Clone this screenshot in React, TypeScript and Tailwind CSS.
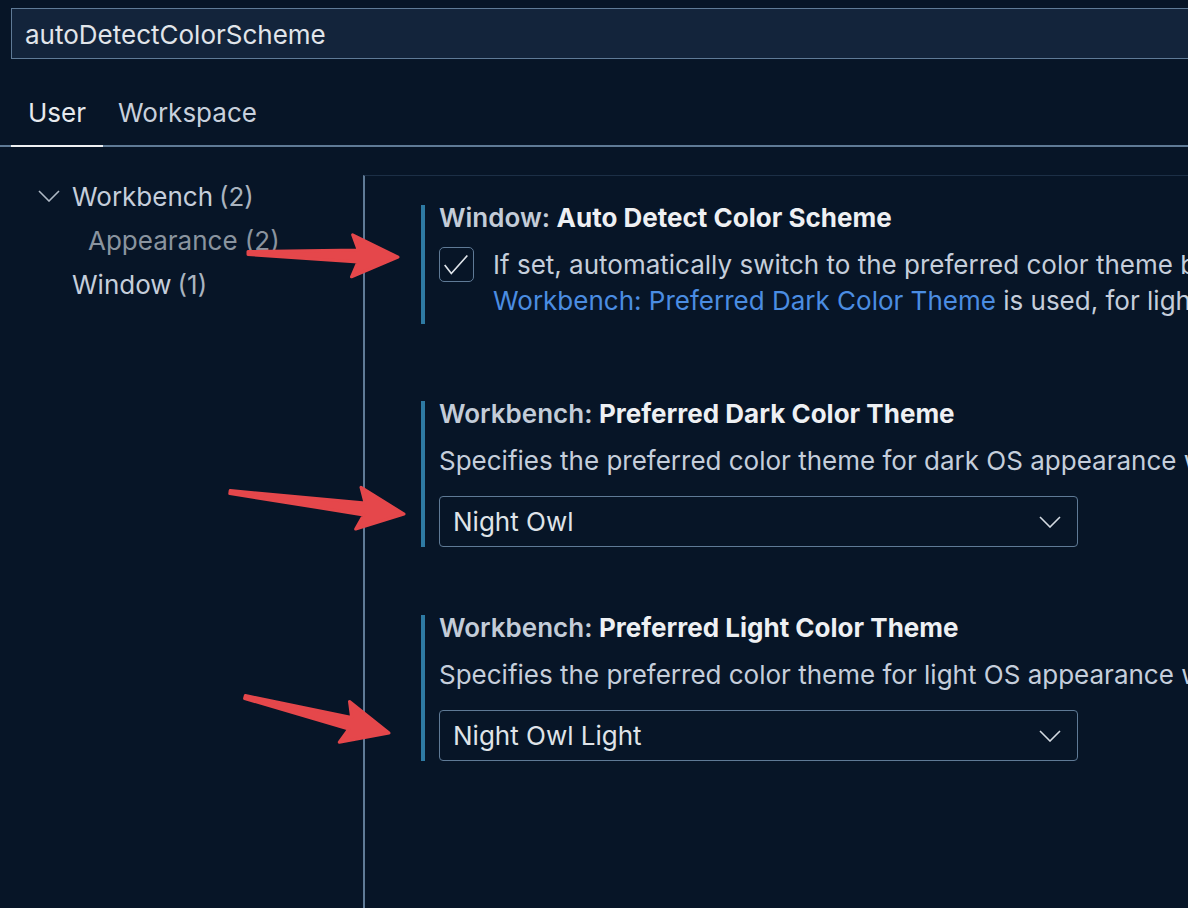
import React from "react";

type Arrow = { tail: [number, number]; tip: [number, number] };

const arrows: Arrow[] = [
  { tail: [248, 253], tip: [398, 257] },
  { tail: [230, 492], tip: [404, 514] },
  { tail: [245, 697], tip: [389, 733] },
];

// builds a tapered annotation arrow as a polygon
function arrowPoints({ tail, tip }: Arrow) {
  const dx = tip[0] - tail[0];
  const dy = tip[1] - tail[1];
  const len = Math.hypot(dx, dy);
  const ux = dx / len;
  const uy = dy / len;
  const nx = -uy;
  const ny = ux;
  const head = 44;
  const bx = tip[0] - ux * head;
  const by = tip[1] - uy * head;
  const pts: [number, number][] = [
    [tail[0] + nx * 1.5, tail[1] + ny * 1.5],
    [bx + ux * 4 + nx * 6, by + uy * 4 + ny * 6],
    [bx - ux * 2 + nx * 21, by - uy * 2 + ny * 21],
    [tip[0], tip[1]],
    [bx - ux * 2 - nx * 21, by - uy * 2 - ny * 21],
    [bx + ux * 4 - nx * 6, by + uy * 4 - ny * 6],
    [tail[0] - nx * 1.5, tail[1] - ny * 1.5],
  ];
  return pts.map((p) => `${p[0].toFixed(1)},${p[1].toFixed(1)}`).join(" ");
}

function Chevron({ className }: { className?: string }) {
  return (
    <svg width="22" height="12" viewBox="0 0 22 12" className={className}>
      <path d="M1 1 L11 11 L21 1" fill="none" stroke="currentColor" strokeWidth="1.6" />
    </svg>
  );
}

function Select({ value }: { value: string }) {
  return (
    <div className="mt-[17px] flex h-[51px] w-[639px] items-center justify-between rounded-[4px] border-[1.5px] border-[#5f7a96] pl-[13px] pr-[16px] text-[#dfe3e8]">
      <span>{value}</span>
      <Chevron className="text-[#d4dae1]" />
    </div>
  );
}

function SettingTitle({ category, name }: { category: string; name: string }) {
  return (
    <div className="h-[28px] leading-[25px] font-semibold">
      <span className="text-[#c3ccd8]">{category}: </span>
      <span className="font-bold text-[#eef0f3]">{name}</span>
    </div>
  );
}

export default function App() {
  return (
    <div
      className="relative h-[908px] w-full overflow-hidden bg-[#071527] text-[26px] whitespace-nowrap text-[#c5cedb]"
      style={{ fontFamily: "Inter, 'Noto Sans', 'Liberation Sans', sans-serif" }}
    >
      {/* search box */}
      <div className="pt-[8px] pl-[11px]">
        <div className="mr-[-20px] flex h-[51px] items-center border-[1.5px] border-[#5f7a96] bg-[#13243b] pt-[2px] pl-[13px] text-[26px] text-[#e1e5ea]">
          autoDetectColorScheme
        </div>
      </div>

      {/* tabs */}
      <div className="mt-[36px] flex border-b-2 border-[#5f7a96] pl-[11px]">
        <div className="-mb-[2px] border-b-2 border-[#eef0f2] px-[17px] pb-[14px] leading-[36px] text-[#e6e9ed]">
          User
        </div>
        <div className="px-[15px] pb-[14px] leading-[36px] text-[#c8d0dc]">Workspace</div>
      </div>

      {/* body */}
      <div className="flex">
        <div className="w-[363px] shrink-0 pt-[27px]">
          <div className="flex h-[44px] items-center pl-[38px]">
            <Chevron className="mr-[12px] text-[#aeb8c4]" />
            <span className="text-[#c5cedb]">Workbench</span>
            <span className="ml-[6px] text-[#a9b3bf]">(2)</span>
          </div>
          <div className="flex h-[44px] items-center pl-[88px] text-[#8a949f]">Appearance (2)</div>
          <div className="flex h-[44px] items-center pl-[72px]">
            <span className="text-[#c5cedb]">Window</span>
            <span className="ml-[6px] text-[#a9b3bf]">(1)</span>
          </div>
        </div>

        <div className="mt-[28px] h-[800px] flex-1 border-t border-l-2 border-t-[#1c2f46] border-l-[#5f7a96] pt-[29px] pl-[56px]">
          {/* setting 1 */}
          <div className="border-l-4 border-[#2e7aa3] pb-[5px] pl-[14px]">
            <SettingTitle category="Window" name="Auto Detect Color Scheme" />
            <div className="mt-[14px] flex items-start">
              <div className="flex h-[35px] w-[35px] shrink-0 items-center justify-center rounded-[5px] border-[1.5px] border-[#5f7a96]">
                <svg width="35" height="35" viewBox="0 0 35 35">
                  <path d="M5 18 L12 27 L29 8" fill="none" stroke="#dfe4ea" strokeWidth="1.8" />
                </svg>
              </div>
              <div className="ml-[19px] leading-[36px]">
                <div>
                  If set, automatically switch to the preferred color theme based on the OS appearance. If the OS appearance is dark, the theme specified at
                </div>
                <div>
                  <span className="text-[#4b8de2]">Workbench: Preferred Dark Color Theme</span> is used, for light{" "}
                  <span className="text-[#4b8de2]">Workbench: Preferred Light Color Theme</span>.
                </div>
              </div>
            </div>
          </div>

          {/* setting 2 */}
          <div className="mt-[77px] border-l-4 border-[#2e7aa3] pl-[14px]">
            <SettingTitle category="Workbench" name="Preferred Dark Color Theme" />
            <div className="mt-[14px] leading-[36px]">
              Specifies the preferred color theme for dark OS appearance when Window: Auto Detect Color Scheme is enabled.
            </div>
            <Select value="Night Owl" />
          </div>

          {/* setting 3 */}
          <div className="mt-[68px] border-l-4 border-[#2e7aa3] pl-[14px]">
            <SettingTitle category="Workbench" name="Preferred Light Color Theme" />
            <div className="mt-[14px] leading-[36px]">
              Specifies the preferred color theme for light OS appearance when Window: Auto Detect Color Scheme is enabled.
            </div>
            <Select value="Night Owl Light" />
          </div>
        </div>
      </div>

      {/* annotation arrows */}
      <svg className="pointer-events-none absolute inset-0" width="1188" height="908">
        {arrows.map((a, i) => (
          <polygon
            key={i}
            points={arrowPoints(a)}
            fill="#e5474b"
            stroke="#e5474b"
            strokeWidth="3"
            strokeLinejoin="round"
          />
        ))}
      </svg>
    </div>
  );
}
